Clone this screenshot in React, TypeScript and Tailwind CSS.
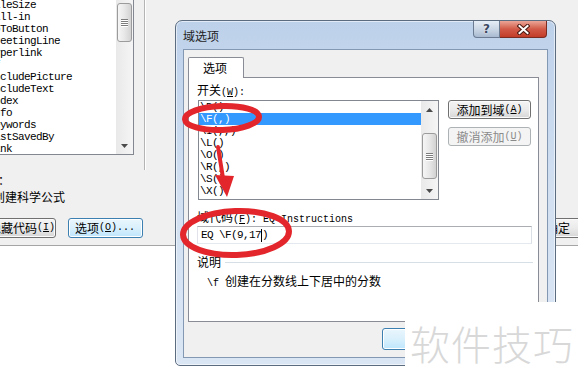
import React from 'react';

const fieldNames = [
  'FileSize',
  'Fill-in',
  'GoToButton',
  'GreetingLine',
  'Hyperlink',
  'If',
  'IncludePicture',
  'IncludeText',
  'Index',
  'Info',
  'Keywords',
  'LastSavedBy',
  'Link',
];

const eqSwitches = ['\\D()', '\\F(,)', '\\I(,,)', '\\L()', '\\O()', '\\R(,)', '\\S()', '\\X()'];

// half-width ascii, like SimSun at 12px
function Mn({ k }: { k: string }) {
  return (
    <span className="font-['Liberation_Mono',monospace] text-[10px]">
      (<span className="underline underline-offset-[1px]">{k}</span>)
    </span>
  );
}

function Asc({ children }: { children: React.ReactNode }) {
  return <span className="font-['Liberation_Mono',monospace] text-[10px] whitespace-pre">{children}</span>;
}

function WinButton({
  children,
  className = '',
  focused = false,
  disabled = false,
}: {
  children?: React.ReactNode;
  className?: string;
  focused?: boolean;
  disabled?: boolean;
}) {
  const skin = disabled
    ? 'border-[#adb2b5] bg-[#f4f4f4] text-[#8a8a8a]'
    : focused
      ? 'border-[#3c7fb1] bg-gradient-to-b from-[#eaf6fd] via-[#d9f0fc] to-[#bee6fd] shadow-[inset_0_0_0_1px_#ffffff]'
      : 'border-[#707070] bg-gradient-to-b from-[#f4f4f4] via-[#ebebeb] to-[#d6d6d6] shadow-[inset_0_0_0_1px_#fbfbfb]';
  return (
    <div className={`flex items-center shrink-0 rounded-[3px] border whitespace-nowrap ${skin} ${className}`}>
      {children}
    </div>
  );
}

function Arrow({ up = false }: { up?: boolean }) {
  return (
    <svg width="7" height="4" viewBox="0 0 7 4">
      <path d={up ? 'M0 4 L3.5 0 L7 4 Z' : 'M0 0 L7 0 L3.5 4 Z'} fill="#4a4a4a" />
    </svg>
  );
}

function VScroll({ thumb }: { thumb: string }) {
  return (
    <div className="w-[17px] shrink-0 flex flex-col bg-gradient-to-r from-[#e9e9e9] to-[#f5f5f5]">
      <div className="h-[17px] flex items-center justify-center">
        <Arrow up />
      </div>
      <div className="flex-1 flex flex-col">
        <div
          className={`mx-[1px] rounded-[3px] border border-[#9b9b9b] bg-gradient-to-r from-[#f6f6f6] via-[#e7e7e7] to-[#d2d2d2] flex items-center justify-center ${thumb}`}
        >
          <div className="flex flex-col gap-[1px]">
            {[0, 1, 2, 3].map((i) => (
              <div key={i} className="w-[7px] h-px bg-[#7c7c7c] shadow-[0_1px_0_#ffffff]" />
            ))}
          </div>
        </div>
      </div>
      <div className="h-[17px] flex items-center justify-center">
        <Arrow />
      </div>
    </div>
  );
}

function MainWindow() {
  return (
    <div className="h-[246px] bg-[#f0f0f0] border-b border-[#a5a5a5] flex flex-col">
      <div className="flex items-start h-[170px]">
        {/* field names list, scrolled past the left edge */}
        <div className="ml-[-20px] mt-[-22px] w-[154px] h-[177px] shrink-0 border border-[#828790] bg-white flex">
          <div className="flex-1 pt-[20px] pl-[7px] flex flex-col overflow-hidden">
            {fieldNames.map((f) => (
              <div
                key={f}
                className="h-[12px] leading-[12px] font-['Liberation_Mono',monospace] text-[11px] tracking-[-0.6px] whitespace-pre"
              >
                {f}
              </div>
            ))}
          </div>
          <VScroll thumb="mt-[7px] h-[39px]" />
        </div>
        <div className="ml-[10px] w-px h-[170px] bg-[#b4b4b4] shadow-[1px_0_0_#ffffff]" />
      </div>

      <div className="mt-[4px] ml-[-26px] h-[12px] leading-[12px] whitespace-nowrap">说明：</div>
      <div className="mt-[5px] ml-[-7px] h-[12px] leading-[12px] whitespace-nowrap">创建科学公式</div>

      <div className="mt-[15px] flex items-center h-[20px]">
        <WinButton className="ml-[-20px] w-[76px] h-[20px] pl-[8px]">
          隐藏代码<Mn k="I" />
        </WinButton>
        <WinButton focused className="ml-[12px] w-[75px] h-[20px] pl-[6px]">
          选项<Mn k="O" />
          <Asc>...</Asc>
        </WinButton>
        <WinButton className="ml-auto mr-[-18px] w-[76px] h-[20px] justify-center">确定</WinButton>
      </div>
    </div>
  );
}

function FieldOptionsDialog() {
  return (
    <div className="absolute left-[175px] top-[20px] w-[381px] h-[346px] flex flex-col px-[7px] pb-[7px] rounded-t-[7px] rounded-b-[5px] border border-[#5c6c80] bg-gradient-to-b from-[#bdd1ea] via-[#d2e0f1] to-[#dbe6f4] shadow-[inset_0_0_0_1px_rgba(255,255,255,0.55)]">
      {/* title bar */}
      <div className="h-[28px] flex items-start shrink-0">
        <div className="mt-[9px] leading-[12px] text-[#1e1e1e]">域选项</div>
        <div className="ml-auto mr-[1px] flex">
          <div className="w-[27px] h-[17px] rounded-bl-[4px] border border-t-0 border-[#6a7b92] bg-gradient-to-b from-[#e6edf6] via-[#cbd7e5] to-[#a9bad0] flex items-center justify-center">
            <span className="font-['DejaVu_Sans',sans-serif] font-bold text-[12px] leading-[12px] text-[#3a4860] [text-shadow:0_0_2px_#ffffff]">
              ?
            </span>
          </div>
          <div className="w-[47px] h-[17px] rounded-br-[4px] border border-t-0 border-l-0 border-[#7a2c22] bg-gradient-to-b from-[#eaa597] via-[#d25a48] to-[#c23c28] flex items-center justify-center">
            <svg width="13" height="11" viewBox="0 0 13 11">
              <path d="M2.5 2 L10.5 9 M10.5 2 L2.5 9" stroke="#4a1810" strokeWidth="4" strokeLinecap="square" />
              <path d="M2.5 2 L10.5 9 M10.5 2 L2.5 9" stroke="#ffffff" strokeWidth="2" strokeLinecap="square" />
            </svg>
          </div>
        </div>
      </div>

      {/* client area */}
      <div className="flex-1 flex flex-col bg-[#f0f0f0] border border-[#8398b3] pl-[4px] pt-[7px]">
        <div className="flex">
          <div className="relative z-10 -mb-px w-[56px] h-[21px] border border-b-0 border-[#898c95] rounded-t-[2px] bg-white flex items-center pl-[14px]">
            选项
          </div>
        </div>

        <div className="w-[351px] h-[245px] border border-[#898c95] bg-white flex flex-col pl-[8px]">
          <div className="mt-[6px] h-[12px] leading-[12px] whitespace-nowrap">
            开关<Mn k="W" />
            <Asc>:</Asc>
          </div>

          <div className="mt-[4px] flex items-start">
            <div className="ml-[1px] w-[241px] h-[100px] border border-[#828790] bg-white flex">
              <div className="flex-1 flex flex-col">
                {eqSwitches.map((s, i) => (
                  <div
                    key={s}
                    className={`h-[12px] leading-[12px] pl-[1px] font-['Liberation_Mono',monospace] text-[11px] tracking-[-0.6px] whitespace-pre ${
                      i === 1 ? 'bg-[#3399ff] text-white' : ''
                    }`}
                  >
                    {s}
                  </div>
                ))}
              </div>
              <VScroll thumb="mt-[15px] h-[46px]" />
            </div>

            <div className="ml-[9px] flex flex-col">
              <WinButton className="w-[83px] h-[19px] justify-center">
                添加到域<Mn k="A" />
              </WinButton>
              <WinButton disabled className="mt-[8px] w-[83px] h-[19px] justify-center">
                撤消添加<Mn k="U" />
              </WinButton>
            </div>
          </div>

          <div className="mt-[11px] h-[12px] leading-[12px] whitespace-nowrap">
            域代码<Mn k="F" />
            <Asc>: EQ Instructions</Asc>
          </div>

          <div className="mt-[3px] w-[335px] h-[18px] border border-[#abadb3] border-b-[#e3e9ef] border-l-[#e2e3ea] border-r-[#dbdfe6] bg-white flex items-center pl-[3px]">
            <span className="font-['Liberation_Mono',monospace] text-[11px] tracking-[-0.6px] whitespace-pre">
              EQ \F(9,17
            </span>
            <span className="w-px h-[13px] bg-black" />
            <span className="font-['Liberation_Mono',monospace] text-[11px] tracking-[-0.6px]">)</span>
          </div>

          <div className="mt-[12px] h-[12px] flex items-center pr-[5px]">
            <span className="leading-[12px]">说明</span>
            <div className="flex-1 ml-[4px] h-px bg-[#d5dfe5]" />
          </div>

          <div className="mt-[7px] pl-[10px] h-[12px] leading-[12px] whitespace-nowrap">
            <Asc>{'\\f '}</Asc>创建在分数线上下居中的分数
          </div>
        </div>

        {/* OK button, mostly hidden under the watermark */}
        <div className="mt-[6px] flex">
          <WinButton focused className="ml-[194px] w-[75px] h-[22px]" />
        </div>
      </div>
    </div>
  );
}

function Markup() {
  return (
    <svg className="absolute left-0 top-0 pointer-events-none" width="578" height="388" viewBox="0 0 578 388">
      <ellipse cx="222" cy="118" rx="37" ry="12" fill="none" stroke="#e3262b" strokeWidth="6" transform="rotate(-2 222 118)" />
      <path d="M218 147 L223 178" stroke="#e3262b" strokeWidth="4" strokeLinecap="round" />
      <path d="M215 175 L234 176 L227 197 Z" fill="#e3262b" />
      <ellipse cx="236" cy="233" rx="53" ry="22" fill="none" stroke="#e3262b" strokeWidth="6" transform="rotate(-2 236 233)" />
    </svg>
  );
}

function Watermark() {
  return (
    <div className="absolute left-[405px] top-[302px] right-0 bottom-0 bg-white">
      <div className="mt-[21px] ml-[5px] text-[40px] leading-[40px] font-light tracking-[1px] text-[#d8d8d8] whitespace-nowrap">
        软件技巧
      </div>
    </div>
  );
}

export default function App() {
  return (
    <div className="relative w-[578px] h-[388px] overflow-hidden bg-white text-[12px] leading-[12px] text-black font-['Noto_Sans_CJK_SC',sans-serif]">
      <MainWindow />
      <FieldOptionsDialog />
      <Markup />
      <Watermark />
    </div>
  );
}
